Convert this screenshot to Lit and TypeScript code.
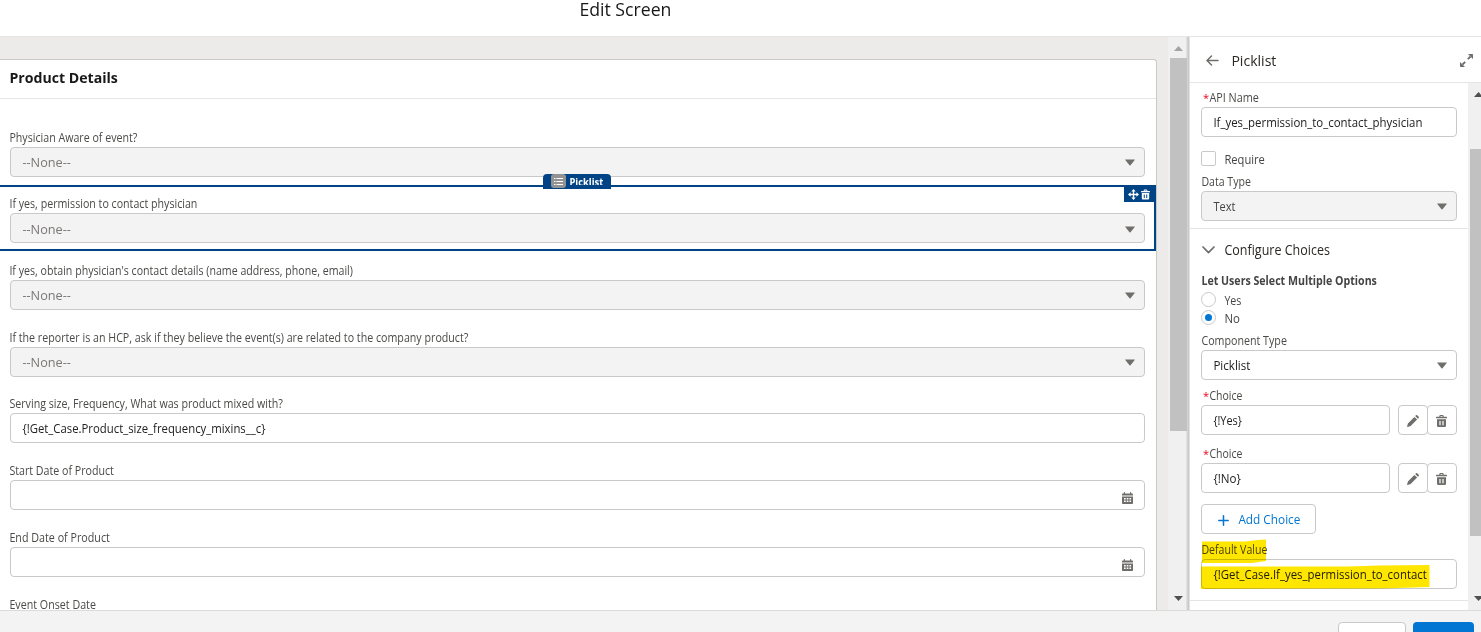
import { LitElement, html, css, svg, nothing } from "lit";
import { customElement, property } from "lit/decorators.js";

/** Single line of text, condensed or expanded so that it fills a given width. */
@customElement("fit-text")
class FitText extends LitElement {
  @property({ type: Number }) w = 0;
  static styles = css`
    :host { display: inline-block; white-space: nowrap; text-align: left; }
    span { display: inline-block; transform-origin: 0 50%; }
  `;
  firstUpdated() {
    const el = this.renderRoot.querySelector("span") as HTMLElement;
    const natural = el.getBoundingClientRect().width;
    if (this.w && natural) {
      this.style.width = `${this.w}px`;
      el.style.transform = `translateX(0.4px) scaleX(${this.w / natural})`;
    }
  }
  render() {
    return html`<span><slot></slot></span>`;
  }
}

const t = (text: string, w: number) => html`<fit-text w=${w}>${text}</fit-text>`;

const calendar = html`<svg class="cal" width="11" height="12" viewBox="0 0 11 12" fill="#706e6b">
  <path d="M0 3.400V2.200Q0 1.400.8 1.400H1.800V.5Q1.800 0 2.400 0T3 .5v.9h5V.5Q8 0 8.600 0T9.200 .5v.9h1q.8 0 .8.8v1.200z"/>
  <path fill-rule="evenodd" d="M0 4.400h11v6.800q0 .8-.8.8H.8Q0 12 0 11.200zM2 6v1.500h1.700V6zm2.700 0v1.500h1.700V6zm2.700 0v1.500h1.700V6zM2 8.500V10h1.700V8.500zm2.700 0V10h1.700V8.500zm2.700 0V10h1.700V8.500z"/>
</svg>`;

const trash = (w: number, h: number) => html`<svg width=${w} height=${h} viewBox="0 0 11 12">
  <path fill="currentColor" fill-rule="evenodd" d="M3.300 1.700V1.200Q3.300 0 4.500 0h2q1.200 0 1.200 1.200v.5h2.700q.6 0 .6.5v1.100H0v-1.100q0-.5.6-.5zm1.200 0h2V1.100h-2zM1 4.200h9v6.600q0 1.200-1.200 1.200H2.200Q1 12 1 10.800zM3.400 6v4.300h1.200V6zm3 0v4.300h1.200V6z"/>
</svg>`;

const pencil = html`<svg width="12" height="12" viewBox="0 0 12 12" fill="#706e6b">
  <path d="M.9 8.400 7.400 1.900l2.700 2.700L3.600 11.100.6 11.900Q0 12 .1 11.400zM8.200 1.100 9 .3q.6-.5 1.200 0L11.700 1.800q.5.600 0 1.200L10.900 3.800z"/>
</svg>`;

const caret = html`<svg class="caret" width="10" height="7" viewBox="0 0 10 7"><path d="M.6.4h8.800q.7 0 .3.600L5.500 6.200q-.5.600-1 0L.3 1Q-.1.4.6.400z" fill="#706e6b"/></svg>`;

const arrow = (up: boolean, color: string) => html`<svg width="9" height="5" viewBox="0 0 9 5"><path d=${up ? "M0 5 4.500 0 9 5z" : "M0 0h9L4.500 5z"} fill=${color}/></svg>`;

@customElement("app-root")
class AppRoot extends LitElement {
  static styles = css`
    * { box-sizing: border-box; }
    :host {
      display: grid; grid-template-rows: 37px 573px 22px; width: 1481px; height: 632px; overflow: hidden;
      background: #fff; color: #3e3e3c; font-family: "Open Sans", "Noto Sans", sans-serif; font-size: 12.500px;
    }
    svg { display: block; flex: none; }
    .top { border-bottom: 1px solid #e5e5e5; text-align: center; font-size: 18px; line-height: 19px; color: #181818; padding-right: 232px; }
    .main { display: grid; grid-template-columns: 1168px 21px 292px; min-height: 0; }
    .canvas { background: #ecebea; padding-top: 22px; overflow: hidden; }
    .card { width: 1157px; height: 600px; background: #fff; border: solid #c9c9c9; border-width: 1px 1px 0 0; border-top-right-radius: 4px; }
    .card-head { height: 39px; border-bottom: 1px solid #e5e5e5; padding: 0 0 4px 9px; font-weight: 700; font-size: 14.500px; color: #181818; display: flex; align-items: center; }
    .rows { padding-top: 19.300px; }
    .row { position: relative; height: 66.670px; padding: 10.300px 11px 0 10px; }
    .row .label { margin-left: -1px; }
    .row.cut .label { padding-top: 1px; }
    .label { height: 18px; line-height: 18px; font-size: 12px; color: #4a4a48; display: flex; }
    .box { height: 30px; border: 1px solid #c9c9c9; border-radius: 4px; background: #fff; display: flex; align-items: center; padding: 0 9px 0 11px; color: #222; white-space: nowrap; }
    .box.grey { background: #f3f3f3; color: #444; }
    .box.none { color: #7a7876; font-size: 13px; padding: 1px 9px 0 10.500px; }
    .caret, .cal { margin-left: auto; }
    .caret { margin-top: 1px; }
    .cal { margin-right: 2px; margin-top: 6px; }
    .outline { position: absolute; left: -2px; right: 0; top: 0; height: 66px; border: 2px solid #014486; }
    .tag { position: absolute; left: 543px; top: -11px; width: 68px; height: 15px; overflow: hidden; background: #014486; border-radius: 4px 4px 0 0; }
    .tag-in { height: 11px; overflow: hidden; padding-left: 26px; color: #fff; font-weight: 700; font-size: 11px; line-height: 16px; }
    .tag-icon { position: absolute; left: 8px; top: 0; }
    .tools { position: absolute; right: 2px; top: 2px; width: 30px; height: 15px; background: #014486; color: #fff; display: flex; align-items: center; gap: 2px; padding-left: 4px; }
    .scroll { background: #f0f0f0; display: flex; flex-direction: column; align-items: flex-start; }
    .up, .down { width: 100%; display: flex; align-items: center; }
    .main-scroll { padding-left: 2px; background: linear-gradient(90deg, #f0f0f0 17.500px, #d8d8d8 19px, #c4c4c4 21px); }
    .main-scroll .up { height: 21px; padding: 2px 0 0 4px; }
    .main-scroll .thumb { width: 17px; height: 373px; background: #c1c1c1; }
    .main-scroll .down { margin-top: auto; height: 24px; padding-left: 4px; }
    .panel { border-left: 1px solid #e2e2e2; min-width: 0; display: grid; grid-template-rows: 46px 1fr; min-height: 0; }
    .panel-head { border-bottom: 1px solid #e5e5e5; display: flex; align-items: center; padding: 1px 9px 0 16px; font-size: 15px; color: #2b2826; }
    .panel-head fit-text { margin-left: 12px; }
    .panel-head .expand { margin-left: auto; margin-right: -1px; }
    .panel-body { display: grid; grid-template-columns: 278px 13px; min-height: 0; }
    .side { padding-left: 2px; overflow: hidden; }
    .side .up { height: 66px; padding: 9px 0 0 4px; align-items: flex-start; }
    .side .thumb { width: 11px; height: 387px; background: #c1c1c1; }
    .side .down { margin-top: auto; height: 14px; padding-left: 4px; align-items: flex-start; }
    .form { padding: 6px 11px 0; overflow: hidden; height: 527px; }
    .star { color: #ea001e; width: 8px; padding-left: 2px; font-size: 11px; }
    .check { display: flex; align-items: center; height: 15px; gap: 8px; margin-top: 14px; margin-bottom: 7px; }
    .check fit-text { padding-top: 2px; color: #444; }
    .sq, .ring { width: 15px; height: 15px; border: 1px solid #c9c9c9; border-radius: 2px; background: #fff; }
    .ring { border-radius: 50%; display: grid; place-items: center; }
    .dot { width: 7px; height: 7px; border-radius: 50%; background: #0176d3; }
    .divider { height: 1px; background: #e5e5e5; margin: 7px -11px 0; }
    .section { height: 42px; display: flex; align-items: center; gap: 9px; padding-left: 1px; font-size: 14px; color: #2b2826; }
    .section fit-text { margin-top: -2px; }
    .bold { font-weight: 700; font-size: 12px; height: 21px; line-height: 20px; color: #444; }
    .radio { margin: 0 0 3px; }
    .label.comp { margin-top: 7px; }
    .label.choice { margin-top: 7px; }
    .label.choice.second { margin-top: 10px; }
    .pair { display: grid; grid-template-columns: 189px 59px; gap: 8px; }
    .btns { display: grid; grid-template-columns: 30px 29px; height: 30px; }
    .btn { border: 1px solid #c9c9c9; border-radius: 4px; display: grid; place-items: center; padding: 1px 1px 0 0; color: #706e6b; background: #fff; }
    .btn + .btn { margin-left: -1px; padding-right: 2px; }
    .add { margin-top: 11px; width: 115px; height: 30px; border: 1px solid #c9c9c9; border-radius: 4px; display: flex; align-items: center; gap: 8.500px; padding: 0 0 0 16px; color: #0176d3; font-size: 13px; }
    .add svg { margin-top: 3px; }
    .label.def { margin-top: 7px; }
    .highlighted { position: relative; }
    .marker { position: absolute; left: -1px; top: -2px; mix-blend-mode: multiply; }
    .divider.last { margin-top: 11px; }
    .foot { background: #f3f3f3; border-top: 1px solid #dddbda; display: flex; justify-content: flex-end; gap: 7px; padding: 11px 7px 0 0; overflow: hidden; }
    .cancel, .done { height: 30px; border-radius: 4px; }
    .cancel { width: 68px; background: #fff; border: 1px solid #c9c9c9; }
    .done { width: 61px; background: #0176d3; }
  `;

  private select(label: string, w: number, extra: unknown = nothing) {
    return html`<div class="row">${extra === nothing ? nothing : html`<div class="outline"></div>`}
      <div class="label">${t(label, w)}</div>
      <div class="box grey none">${t("--None--", 48.5)}${caret}</div>${extra}</div>`;
  }

  private choice(value: string, w: number, second = false) {
    return html`<div class="label choice ${second ? "second" : ""}"><span class="star">*</span>${t("Choice", 33)}</div>
      <div class="pair"><div class="box">${t(value, w)}</div>
        <div class="btns"><div class="btn">${pencil}</div><div class="btn">${trash(11, 12)}</div></div></div>`;
  }

  render() {
    const overlay = html`
      <div class="tag"><div class="tag-in">${t("Picklist", 34)}</div>
        <svg class="tag-icon" width="15" height="15" viewBox="0 0 15 15"><rect width="15" height="14" rx="3" fill="#939393"/>
          ${[4, 7, 10].map((y) => svg`<path d=${`M3 ${y}.5h1.500M5.500 ${y}.5h6.500`} stroke="#fff" stroke-width="1.200"/>`)}</svg></div>
      <div class="tools">
        <svg width="11" height="11" viewBox="0 0 11 11"><path d="M5.500 2v7M2 5.500h7" stroke="#fff" stroke-width="1.400"/><path fill="#fff" d="M5.500 0 7.700 2.600H3.300zM5.500 11 3.300 8.400h4.400zM0 5.500 2.600 3.300v4.400zM11 5.500 8.400 7.700V3.300z"/></svg>
        ${trash(9, 11)}
      </div>`;
    return html`
      <div class="top">${t("Edit Screen", 92)}</div>
      <div class="main">
        <div class="canvas"><div class="card">
          <div class="card-head">${t("Product Details", 108.5)}</div>
          <div class="rows">
            ${this.select("Physician Aware of event?", 128)}
            ${this.select("If yes, permission to contact physician", 188, overlay)}
            ${this.select("If yes, obtain physician's contact details (name address, phone, email)", 343.5)}
            ${this.select("If the reporter is an HCP, ask if they believe the event(s) are related to the company product?", 459)}
            <div class="row"><div class="label">${t("Serving size, Frequency, What was product mixed with?", 273.5)}</div>
              <div class="box">${t("{!Get_Case.Product_size_frequency_mixins__c}", 243)}</div></div>
            <div class="row"><div class="label">${t("Start Date of Product", 104.5)}</div><div class="box">${calendar}</div></div>
            <div class="row"><div class="label">${t("End Date of Product", 100.5)}</div><div class="box">${calendar}</div></div>
            <div class="row cut"><div class="label">${t("Event Onset Date", 86.5)}</div></div>
          </div>
        </div></div>
        <div class="scroll main-scroll"><div class="up">${arrow(true, "#a3a3a3")}</div><div class="thumb"></div><div class="down">${arrow(false, "#505050")}</div></div>
        <div class="panel">
          <div class="panel-head">
            <svg width="13" height="11" viewBox="0 0 13 11" fill="none" stroke="#706e6b" stroke-width="1.500" stroke-linecap="round" stroke-linejoin="round"><path d="M12 5.500H1.200M5.500 1 1 5.500 5.500 10"/></svg>
            ${t("Picklist", 45)}
            <svg class="expand" width="13" height="13" viewBox="0 0 13 13"><path d="M7.800 5.200 10.500 2.500M5.200 7.800 2.500 10.500" stroke="#706e6b" stroke-width="1.800"/><path fill="#706e6b" d="M8 0h4.300q.7 0 .7.700V5zM5 13H.7Q0 13 0 12.300V8z"/></svg>
          </div>
          <div class="panel-body">
            <div class="form">
              <div class="label"><span class="star">*</span>${t("API Name", 49.5)}</div>
              <div class="box">${t("If_yes_permission_to_contact_physician", 209)}</div>
              <div class="check"><div class="sq"></div>${t("Require", 40.5)}</div>
              <div class="label">${t("Data Type", 49.5)}</div>
              <div class="box grey">${t("Text", 22)}${caret}</div>
              <div class="divider"></div>
              <div class="section"><svg width="13" height="8" viewBox="0 0 13 8" fill="none" stroke="#706e6b" stroke-width="1.700" stroke-linecap="round" stroke-linejoin="round"><path d="M1 1l5.500 5.700L12 1"/></svg>${t("Configure Choices", 105.5)}</div>
              <div class="bold">${t("Let Users Select Multiple Options", 175.5)}</div>
              <div class="check radio"><div class="ring"></div>${t("Yes", 17)}</div>
              <div class="check radio"><div class="ring"><div class="dot"></div></div>${t("No", 15.5)}</div>
              <div class="label comp">${t("Component Type", 85.5)}</div>
              <div class="box">${t("Picklist", 37)}${caret}</div>
              ${this.choice("{!Yes}", 28.5)}
              ${this.choice("{!No}", 27.5, true)}
              <div class="add"><svg width="11" height="11" viewBox="0 0 11 11" stroke="#0176d3" stroke-width="1.500" stroke-linecap="round"><path d="M5.500.8v9.400M.8 5.500h9.400"/></svg>${t("Add Choice", 62)}</div>
              <div class="highlighted">
                <div class="label def">${t("Default Value", 66)}</div>
                <div class="box">${t("{!Get_Case.If_yes_permission_to_contact", 213.5)}</div>
                <svg class="marker" width="232" height="52" viewBox="0 0 232 52" fill="#ffe600"><path d="M2 2.500H45L58 1l8-.5V22l-14 2H2zM1 27.500H148L180 26.500 229.500 26V48L180 49.500 1 50z"/></svg>
              </div>
              <div class="divider last"></div>
            </div>
            <div class="scroll side"><div class="up">${arrow(true, "#505050")}</div><div class="thumb"></div><div class="down">${arrow(false, "#505050")}</div></div>
          </div>
        </div>
      </div>
      <div class="foot"><div class="cancel"></div><div class="done"></div></div>`;
  }
}
